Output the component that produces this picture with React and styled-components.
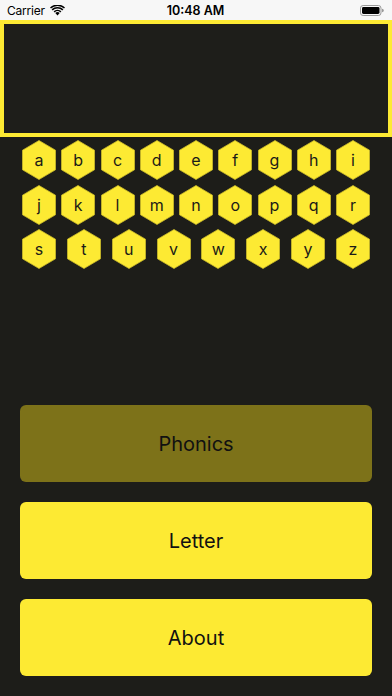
import React from "react";
import styled, { createGlobalStyle } from "styled-components";

const Global = createGlobalStyle`
  html, body { margin: 0; padding: 0; background: #1d1d19; }
  #root { width: 392px; min-height: 696px; }
`;

const Page = styled.div`
  width: 392px;
  height: 696px;
  display: flex;
  flex-direction: column;
  background: #1d1d19;
  font-family: Inter, "Liberation Sans", sans-serif;
  overflow: hidden;
`;

const StatusBar = styled.div`
  height: 20px;
  flex: none;
  background: #f7f7f7;
  display: grid;
  grid-template-columns: 1fr auto 1fr;
  align-items: center;
  padding: 0 8px 0 7px;
  color: #000;
  font-family: Inter, "Liberation Sans", sans-serif;
`;

const Left = styled.div`
  display: flex;
  align-items: center;
  gap: 5px;
  font-size: 12px;
  letter-spacing: -0.2px;
`;

const Time = styled.div`
  font-size: 12.5px;
  font-weight: 600;
`;

const Right = styled.div`
  display: flex;
  justify-content: flex-end;
`;

const Display = styled.div`
  height: 117px;
  box-sizing: border-box;
  flex: none;
  border: 4px solid #fdea33;
  background: #1e1e1a;
`;

const Keys = styled.div`
  display: flex;
  flex-direction: column;
  gap: 4.5px;
  padding: 3px 22px 0;
`;

const KeyRow = styled.div`
  display: flex;
  justify-content: space-between;
  height: 40px;
`;

const Hex = styled.div`
  position: relative;
  width: 34px;
  height: 40px;
  display: flex;
  align-items: center;
  justify-content: center;
  font-size: 16px;
  color: #1b1b17;
  svg { position: absolute; inset: 0; }
  span { position: relative; line-height: 1; }
`;

const Buttons = styled.div`
  margin-top: auto;
  display: flex;
  flex-direction: column;
  gap: 20px;
  padding: 0 20px 20px;
`;

const Button = styled.div`
  height: 77px;
  border-radius: 6px;
  background: ${(p) => (p.$dim ? "#7d7219" : "#fdea33")};
  display: flex;
  align-items: center;
  justify-content: center;
  font-size: 20px;
  color: #111;
`;

const Key = ({ ch }) => (
  <Hex>
    <svg width="34" height="40" viewBox="0 0 34 40">
      <polygon
        points="17,0.5 33.5,10.2 33.5,29.8 17,39.5 0.5,29.8 0.5,10.2"
        fill="#fdea33"
        stroke="#cbbb29"
        strokeWidth="0.8"
      />
    </svg>
    <span>{ch}</span>
  </Hex>
);

const rows = ["abcdefghi", "jklmnopqr", "stuvwxyz"];

export default function App() {
  return (
    <>
      <Global />
      <Page>
        <StatusBar>
          <Left>
            <span>Carrier</span>
            <svg width="15" height="11" viewBox="0 0 15 11">
              <path d="M7.5 10.5 L5.3 8.1 A3.2 3.2 0 0 1 9.7 8.1 Z" fill="#000" />
              <path d="M3.6 6.3 A5.6 5.6 0 0 1 11.4 6.3 L10.3 7.4 A4.1 4.1 0 0 0 4.7 7.4 Z" fill="#000" />
              <path d="M1.6 4.3 A8.4 8.4 0 0 1 13.4 4.3 L12.3 5.4 A6.9 6.9 0 0 0 2.7 5.4 Z" fill="#000" />
              <path d="M0 2.5 A10.8 10.8 0 0 1 15 2.5 L14 3.5 A9.4 9.4 0 0 0 1 3.5 Z" fill="#000" />
            </svg>
          </Left>
          <Time>10:48 AM</Time>
          <Right>
            <svg width="24" height="11" viewBox="0 0 24 11">
              <rect x="0.5" y="0.5" width="20.5" height="10" rx="2.6" fill="none" stroke="#999" strokeWidth="1" />
              <rect x="2" y="2" width="17.5" height="7" rx="1.4" fill="#000" />
              <path d="M22 3.7 a1.6 1.6 0 0 1 0 3.6 z" fill="#999" />
            </svg>
          </Right>
        </StatusBar>
        <Display />
        <Keys>
          {rows.map((r) => (
            <KeyRow key={r}>
              {r.split("").map((c) => (
                <Key key={c} ch={c} />
              ))}
            </KeyRow>
          ))}
        </Keys>
        <Buttons>
          <Button $dim>Phonics</Button>
          <Button>Letter</Button>
          <Button>About</Button>
        </Buttons>
      </Page>
    </>
  );
}
